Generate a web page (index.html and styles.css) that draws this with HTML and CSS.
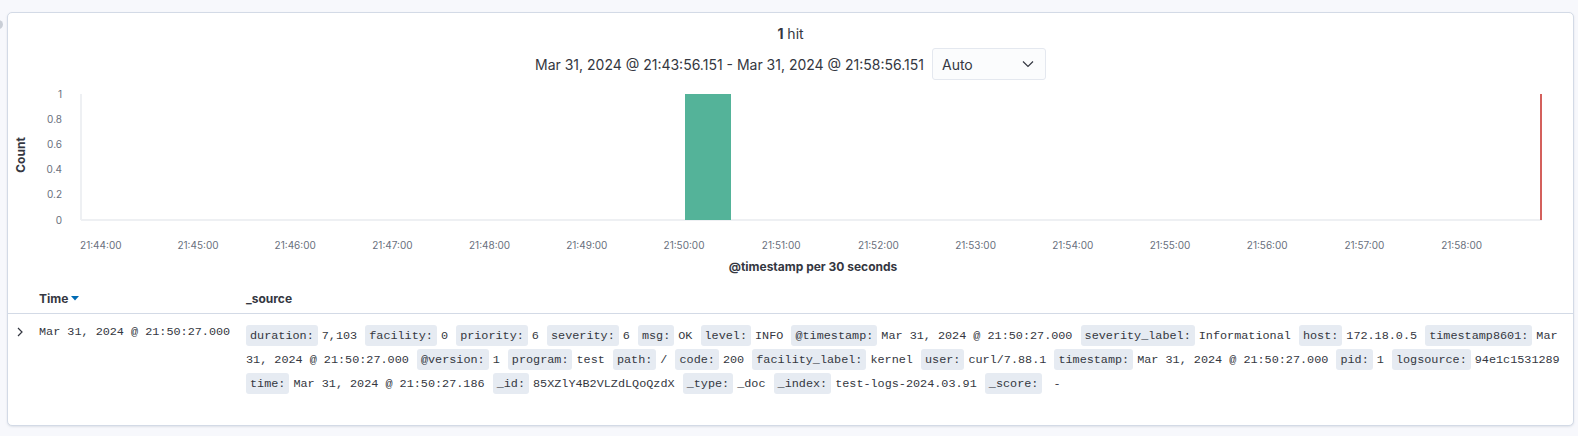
FILE: index.html
```html
<!DOCTYPE html>
<html lang="en">
<head>
<meta charset="utf-8">
<title>Discover</title>
<link rel="stylesheet" href="styles.css">
</head>
<body>
<div class="page">
  <span class="toggle"></span>
  <section class="panel">
    <div class="hits"><strong>1</strong> hit</div>
    <div class="range">
      <span class="range-text">Mar 31, 2024 @ 21:43:56.151 - Mar 31, 2024 @ 21:58:56.151</span>
      <div class="select">
        <span>Auto</span>
        <svg class="chev" width="12" height="8" viewBox="0 0 12 8"><polyline points="1,1.5 6,6.5 11,1.5" fill="none" stroke="#343741" stroke-width="1.2"/></svg>
      </div>
    </div>
    <svg class="chart" width="1565" height="196" viewBox="0 0 1565 196">
      <g class="ylabels">
        <text x="54" y="13.5">1</text>
        <text x="54" y="38.7">0.8</text>
        <text x="54" y="63.9">0.6</text>
        <text x="54" y="89.1">0.4</text>
        <text x="54" y="114.3">0.2</text>
        <text x="54" y="139.5">0</text>
      </g>
      <text class="axis-title" transform="translate(17 71) rotate(-90)">Count</text>
      <line x1="73" y1="10" x2="73" y2="136" stroke="#eef0f3" stroke-width="2"/>
      <line x1="73" y1="136" x2="1534" y2="136" stroke="#eef0f3" stroke-width="2"/>
      <rect x="677" y="10" width="46" height="126" fill="#54b399"/>
      <line x1="1533" y1="10" x2="1533" y2="136" stroke="#d4605c" stroke-width="2"/>
      <g class="xlabels">
        <text x="92.8" y="165">21:44:00</text>
        <text x="190" y="165">21:45:00</text>
        <text x="287.2" y="165">21:46:00</text>
        <text x="384.4" y="165">21:47:00</text>
        <text x="481.6" y="165">21:48:00</text>
        <text x="578.8" y="165">21:49:00</text>
        <text x="676" y="165">21:50:00</text>
        <text x="773.2" y="165">21:51:00</text>
        <text x="870.4" y="165">21:52:00</text>
        <text x="967.6" y="165">21:53:00</text>
        <text x="1064.8" y="165">21:54:00</text>
        <text x="1162" y="165">21:55:00</text>
        <text x="1259.2" y="165">21:56:00</text>
        <text x="1356.4" y="165">21:57:00</text>
        <text x="1453.6" y="165">21:58:00</text>
      </g>
      <text class="axis-title" x="805" y="187" text-anchor="middle">@timestamp per 30 seconds</text>
    </svg>
    <div class="table">
      <div class="thead">
        <div class="th"></div>
        <div class="th">Time <svg class="sort" width="8" height="5" viewBox="0 0 8 5"><polygon points="0,0 8,0 4,4.5" fill="#006bb4"/></svg></div>
        <div class="th">_source</div>
      </div>
      <div class="row">
        <div class="exp"><svg width="6" height="10" viewBox="0 0 6 10"><polyline points="1,1 5,5 1,9" fill="none" stroke="#343741" stroke-width="1.2"/></svg></div>
        <div class="time-cell">Mar 31, 2024 @ 21:50:27.000</div>
        <dl class="source"><dt>duration:</dt><dd>7,103</dd> <dt>facility:</dt><dd>0</dd> <dt>priority:</dt><dd>6</dd> <dt>severity:</dt><dd>6</dd> <dt>msg:</dt><dd>OK</dd> <dt>level:</dt><dd>INFO</dd> <dt>@timestamp:</dt><dd>Mar 31, 2024 @ 21:50:27.000</dd> <dt>severity_label:</dt><dd>Informational</dd> <dt>host:</dt><dd>172.18.0.5</dd> <dt>timestamp8601:</dt><dd>Mar 31, 2024 @ 21:50:27.000</dd> <dt>@version:</dt><dd>1</dd> <dt>program:</dt><dd>test</dd> <dt>path:</dt><dd>/</dd> <dt>code:</dt><dd>200</dd> <dt>facility_label:</dt><dd>kernel</dd> <dt>user:</dt><dd>curl/7.88.1</dd> <dt>timestamp:</dt><dd>Mar 31, 2024 @ 21:50:27.000</dd> <dt>pid:</dt><dd>1</dd> <dt>logsource:</dt><dd>94e1c1531289</dd> <dt>time:</dt><dd>Mar 31, 2024 @ 21:50:27.186</dd> <dt>_id:</dt><dd>85XZlY4B2VLZdLQoQzdX</dd> <dt>_type:</dt><dd>_doc</dd> <dt>_index:</dt><dd>test-logs-2024.03.91</dd> <dt>_score:</dt><dd>&nbsp;-</dd></dl>
      </div>
    </div>
  </section>
</div>
</body>
</html>
```
FILE: styles.css
```css
* { box-sizing: border-box; }
html, body { margin: 0; padding: 0; }
body {
  background: #f7f8fc;
  font-family: Inter, "Noto Sans", sans-serif;
  color: #343741;
  width: 1578px;
  height: 436px;
  overflow: hidden;
}
.page {
  position: relative;
  padding: 12px 4px 10px 7px;
}
.toggle {
  position: absolute;
  left: -6px;
  top: 20px;
  width: 9px;
  height: 9px;
  border-radius: 50%;
  background: #c9ced6;
}
.panel {
  height: 414px;
  background: #fff;
  border: 1px solid #d3dae6;
  border-radius: 5px;
  box-shadow: 0 1px 2px rgba(152, 162, 179, 0.25);
  overflow: hidden;
  display: flex;
  flex-direction: column;
}
.hits {
  margin-top: 9px;
  height: 24px;
  line-height: 24px;
  text-align: center;
  font-size: 14px;
}
.hits strong { font-weight: 700; }
.range {
  margin-top: 2px;
  display: flex;
  justify-content: center;
  align-items: center;
  gap: 8px;
  height: 32px;
}
.range-text { font-size: 14px; padding-top: 1px; }
.select {
  width: 114px;
  height: 32px;
  border: 1px solid #e4e8ef;
  border-radius: 3px;
  background: #fbfcfd;
  display: flex;
  align-items: center;
  justify-content: space-between;
  padding: 0 11px 0 9px;
  font-size: 14px;
}
.chart {
  display: block;
  margin-top: 4px;
  flex: none;
  overflow: visible;
}
.ylabels text {
  font-family: Inter, sans-serif;
  font-size: 10px;
  fill: #69707d;
  text-anchor: end;
}
.xlabels text {
  font-family: Inter, sans-serif;
  font-size: 10px;
  fill: #69707d;
  text-anchor: middle;
}
.axis-title {
  font-family: Inter, sans-serif;
  font-size: 12px;
  font-weight: 700;
  fill: #343741;
}
.axis-title:first-of-type { text-anchor: middle; }
.thead, .row {
  display: grid;
  grid-template-columns: 31px 207px 1fr;
}
.thead {
  height: 34px;
  border-bottom: 1px solid #d3dae6;
  align-items: center;
  font-size: 12px;
  font-weight: 700;
  padding-top: 3px;
}
.th { display: flex; align-items: center; }
.sort { margin-left: 3px; margin-top: 1px; }
.row {
  padding-top: 9px;
}
.exp {
  padding: 4px 0 0 9px;
  height: 18px;
}
.exp svg { display: block; }
.time-cell {
  font-family: "Liberation Mono", "DejaVu Sans Mono", monospace;
  font-size: 11.8px;
  line-height: 18px;
  white-space: nowrap;
}
.source {
  margin: 1px 0 0;
  padding-right: 10px;
  font-family: "Liberation Mono", "DejaVu Sans Mono", monospace;
  font-size: 11.8px;
  line-height: 24px;
}
.source dt, .source dd { margin: 0; }
.source dt {
  display: inline-block;
  line-height: 14px;
  background: #e6ebf2;
  border-radius: 3px;
  padding: 4px 4px 3px;
  margin-right: 4px;
}
.source dd { display: inline; margin-right: 1px; }
```
